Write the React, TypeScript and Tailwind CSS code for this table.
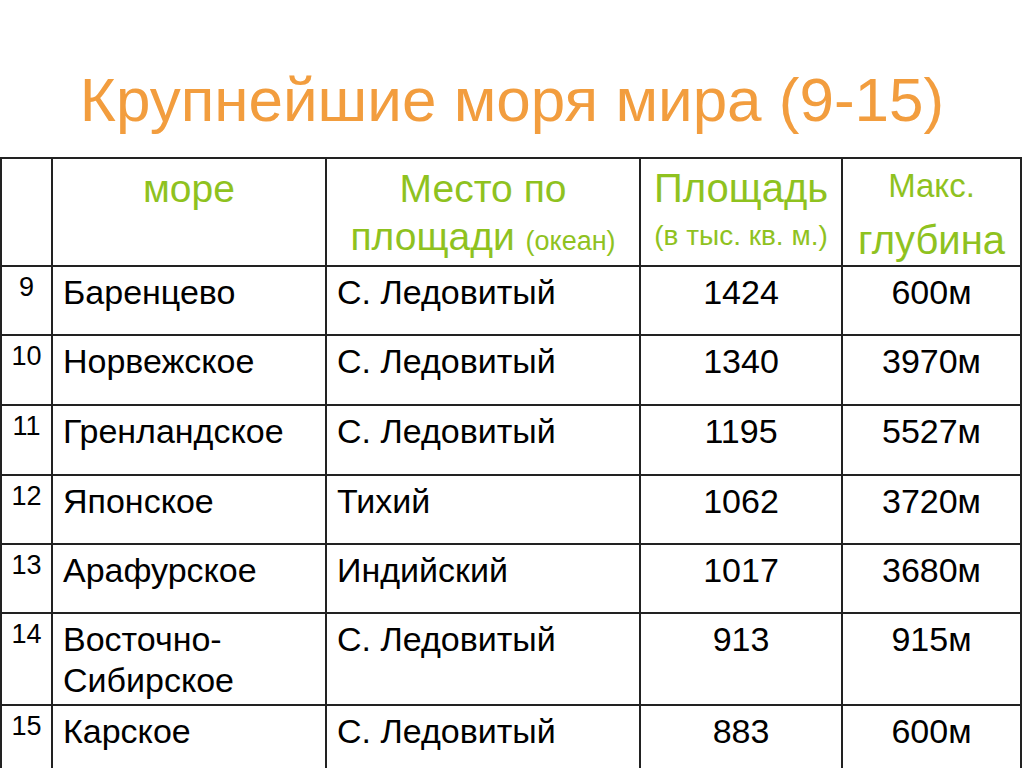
const seas = [
  { n: '9', name: ['Баренцево'], ocean: 'С. Ледовитый', area: '1424', depth: '600м', h: 'h-[69px]' },
  { n: '10', name: ['Норвежское'], ocean: 'С. Ледовитый', area: '1340', depth: '3970м', h: 'h-[70px]' },
  { n: '11', name: ['Гренландское'], ocean: 'С. Ледовитый', area: '1195', depth: '5527м', h: 'h-[70px]' },
  { n: '12', name: ['Японское'], ocean: 'Тихий', area: '1062', depth: '3720м', h: 'h-[69px]' },
  { n: '13', name: ['Арафурское'], ocean: 'Индийский', area: '1017', depth: '3680м', h: 'h-[69px]' },
  { n: '14', name: ['Восточно-', 'Сибирское'], ocean: 'С. Ледовитый', area: '913', depth: '915м', h: 'h-[92px]' },
  { n: '15', name: ['Карское'], ocean: 'С. Ледовитый', area: '883', depth: '600м', h: 'h-[70px]' },
];

const cell = 'border-r-2 border-b-2 border-[#222]';

export default function App() {
  return (
    <div className="w-[1024px] h-[768px] overflow-hidden bg-white font-['Liberation_Sans',Arial,sans-serif]">
      <div className="h-[157px] pt-[63px] text-center text-[62px] leading-[74px] text-[#f29d3e]">
        Крупнейшие моря мира (9-15)
      </div>

      <div className="w-[1022px] grid grid-cols-[51px_274px_314px_202px_179px] border-l-2 border-t-2 border-[#222]">
        {/* header */}
        <div className={`${cell} h-[108px]`} />
        <div className={`${cell} h-[108px] pt-[6px] text-center text-[39px] leading-[48px] text-[#8fc21f]`}>
          море
        </div>
        <div className={`${cell} h-[108px] pt-[6px] text-center text-[39px] leading-[48px] text-[#8fc21f] whitespace-nowrap`}>
          <div>Место по</div>
          <div>
            площади <span className="text-[27px]">(океан)</span>
          </div>
        </div>
        <div className={`${cell} h-[108px] pt-[3px] text-center text-[#8fc21f] whitespace-nowrap`}>
          <div className="text-[40px] leading-[52px]">Площадь</div>
          <div className="text-[28px] leading-[44px]">(в тыс. кв. м.)</div>
        </div>
        <div className={`${cell} h-[108px] text-center text-[#8fc21f] whitespace-nowrap`}>
          <div className="text-[33px] leading-[54px]">Макс.</div>
          <div className="text-[40px] leading-[54px]">глубина</div>
        </div>

        {seas.map((s) => (
          <div key={s.n} className="contents">
            <div className={`${cell} ${s.h} pt-[5px] text-center text-[27px] leading-[30px] text-black`}>{s.n}</div>
            <div className={`${cell} ${s.h} pl-[10px] pt-[5px] text-[34px] leading-[41px] text-black`}>
              {s.name.map((line) => (
                <div key={line}>{line}</div>
              ))}
            </div>
            <div className={`${cell} ${s.h} pl-[10px] pt-[5px] text-[34px] leading-[41px] text-black`}>{s.ocean}</div>
            <div className={`${cell} ${s.h} pt-[5px] text-center text-[34px] leading-[41px] text-black`}>{s.area}</div>
            <div className={`${cell} ${s.h} pt-[5px] text-center text-[34px] leading-[41px] text-black`}>{s.depth}</div>
          </div>
        ))}
      </div>
    </div>
  );
}
